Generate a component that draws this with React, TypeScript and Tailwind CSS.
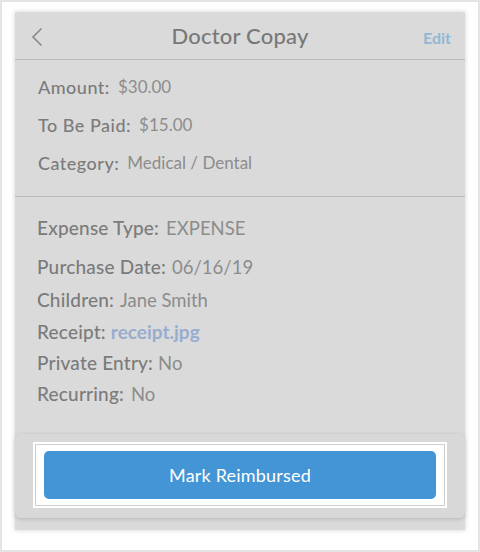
import React from 'react'

const topRows = [
  { label: 'Amount:', value: '$30.00' },
  { label: 'To Be Paid:', value: '$15.00' },
  { label: 'Category:', value: 'Medical / Dental' },
]

const details = [
  { label: 'Expense Type:', value: 'EXPENSE', mt: 'mt-0', gap: 'ml-[7px]' },
  { label: 'Purchase Date:', value: '06/16/19', mt: 'mt-[15px]', gap: 'ml-[6px]' },
  { label: 'Children:', value: 'Jane Smith', mt: 'mt-[9px]', gap: 'ml-[6px]' },
  { label: 'Receipt:', value: 'receipt.jpg', mt: 'mt-[8px]', gap: 'ml-[5px]', link: true },
  { label: 'Private Entry:', value: 'No', mt: 'mt-[7px]', gap: 'ml-[5px]' },
  { label: 'Recurring:', value: 'No', mt: 'mt-[7px]', gap: 'ml-[7px]' },
]

export default function App() {
  return (
    <div
      className="w-[480px] h-[552px] bg-white border-2 border-[#e4e4e4] pt-[10px] px-[13px]"
      style={{ fontFamily: 'Lato, "Open Sans", sans-serif' }}
    >
      <div className="h-[518px] bg-[#dadada] shadow-[0_0_5px_rgba(0,0,0,0.18)] flex flex-col">
        {/* Header */}
        <div className="relative h-[48px] flex items-center justify-center border-b border-[#bcbcbc]">
          <svg className="absolute left-[16px] top-[15px]" width="12" height="20" viewBox="0 0 12 20" fill="none">
            <path d="M10.5 1.5 L2 10 L10.5 18.5" stroke="#8a8a8a" strokeWidth="1.6" />
          </svg>
          <h1 className="text-[22px] text-[#787878] font-medium tracking-[0.2px]">Doctor Copay</h1>
          <span className="absolute right-[14px] top-[14px] text-[16px] font-bold text-[#93b7d3]">Edit</span>
        </div>

        {/* Summary */}
        <div className="px-[23px] pt-[16px] pb-[22px] flex flex-col gap-[16px] border-b border-[#bcbcbc]">
          {topRows.map((r) => (
            <div key={r.label} className="h-[22px] flex items-center leading-[22px]">
              <span className="text-[18px] font-medium text-[#7b7b7b] tracking-[0.5px]">{r.label}</span>
              <span className="ml-[8px] text-[17px] text-[#8c8c8c]">{r.value}</span>
            </div>
          ))}
        </div>

        {/* Details */}
        <div className="px-[22px] pt-[19px] flex flex-col text-[19px] leading-[24px]">
          {details.map((d) => (
            <div key={d.label} className={`h-[24px] flex items-center ${d.mt}`}>
              <span className="font-medium text-[#7b7b7b] tracking-[0.2px]">{d.label}</span>
              <span className={d.link ? `${d.gap} font-bold text-[#97add0]` : `${d.gap} text-[18.5px] text-[#8c8c8c]`}>
                {d.value}
              </span>
            </div>
          ))}
        </div>

        {/* Action card */}
        <div className="mt-auto mb-[12px] rounded-md bg-[#d8d8d8] shadow-[0_1px_4px_rgba(0,0,0,0.16)] px-[18px] pt-[8px] pb-[10px]">
          <div className="bg-white p-[2px]">
            <div className="border border-[#cfcfcf] bg-white px-[8px] py-[6px]">
              <button className="w-full h-[48px] rounded-[5px] bg-[#4495d5] text-white text-[18px] tracking-[0.2px]">
                Mark Reimbursed
              </button>
            </div>
          </div>
        </div>
      </div>
    </div>
  )
}
